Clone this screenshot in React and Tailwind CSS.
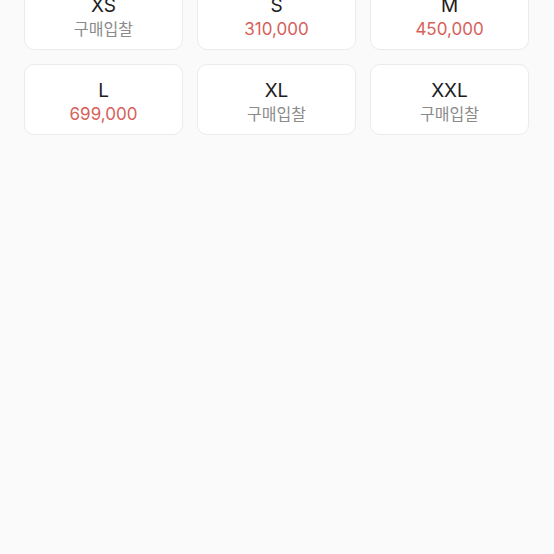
const sizes = [
  { size: 'XS', price: null },
  { size: 'S', price: '310,000' },
  { size: 'M', price: '450,000' },
  { size: 'L', price: '699,000' },
  { size: 'XL', price: null },
  { size: 'XXL', price: null },
]

export default function App() {
  return (
    <div className="w-[554px] h-[554px] overflow-hidden bg-[#fafafa]"
      style={{ fontFamily: 'Inter, "Noto Sans CJK KR", sans-serif' }}>
      <div className="grid grid-cols-3 gap-[14px] pl-[24px] pr-[25px] -mt-[21px]">
        {sizes.map(s => (
          <div key={s.size}
            className="h-[71px] rounded-[10px] bg-white border border-[#ebebeb] flex flex-col items-center justify-center pt-[5px]">
            <div className="text-[19px] leading-[24px] text-[#1c1c1c]">{s.size}</div>
            {s.price
              ? <div className="text-[17px] leading-[22px] text-[#d6605a]">{s.price}</div>
              : <div className="text-[16px] leading-[22px] text-[#8a8a8a]">구매입찰</div>}
          </div>
        ))}
      </div>
    </div>
  )
}
